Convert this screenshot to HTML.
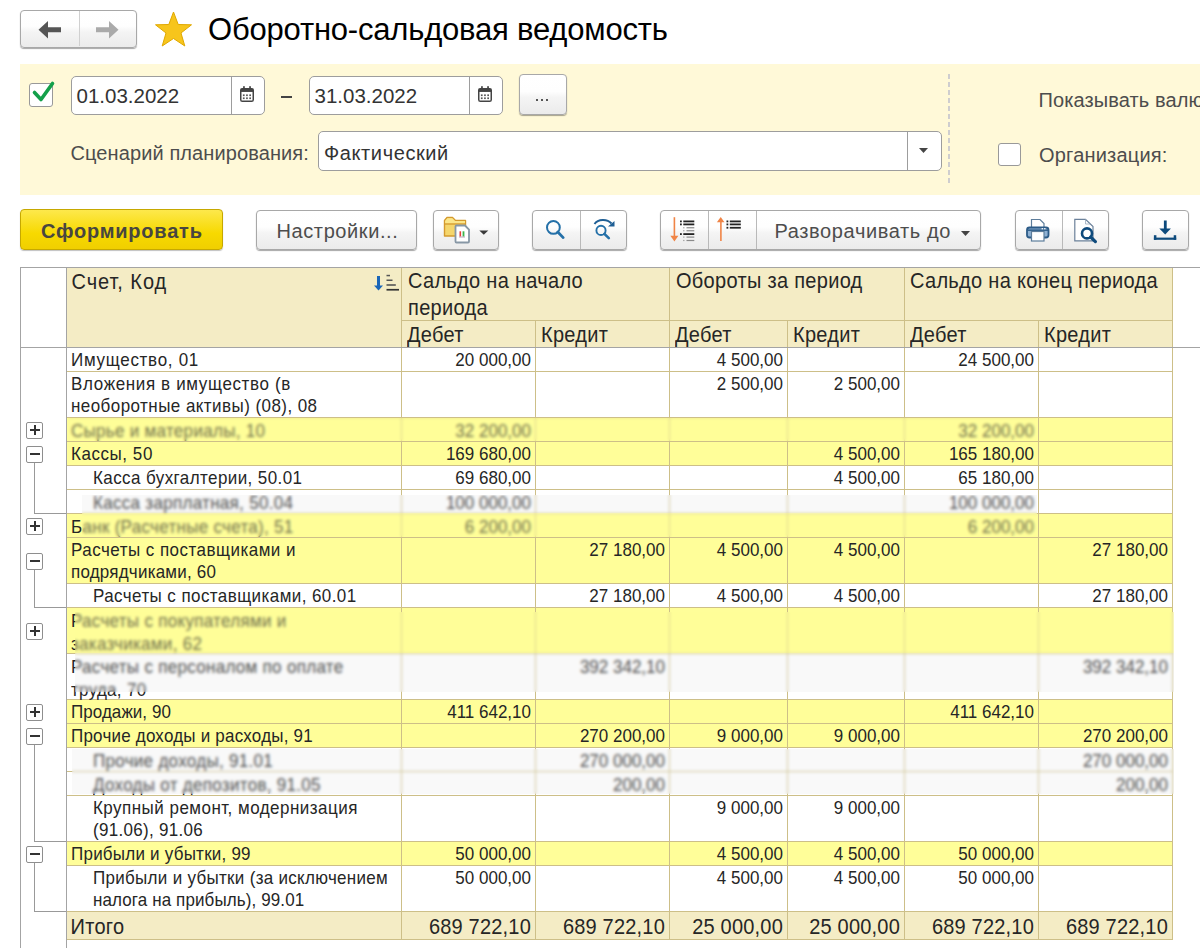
<!DOCTYPE html>
<html><head><meta charset="utf-8"><style>
html,body{margin:0;padding:0;background:#fff;width:1200px;height:948px;overflow:hidden;position:relative;}
.a{position:absolute;box-sizing:content-box;}
.t{position:absolute;white-space:nowrap;font-family:"Liberation Sans", sans-serif;}
.btn{background:linear-gradient(#ffffff,#fefefe 42%,#f4f4f4 58%,#ebebeb);border:1px solid #a8a8a8;box-shadow:0 1px 1px rgba(0,0,0,0.35);}
svg{position:absolute;overflow:visible;}
</style></head><body>
<div class="a btn" style="left:20px;top:10px;width:115px;height:36px;border-radius:4px;"></div><div class="a" style="left:79px;top:11px;width:1px;height:35px;background:#d0d0d0;"></div><svg class="a" style="left:38px;top:20px" width="24" height="20" viewBox="0 0 24 20"><path d="M0.5 9.75 L10 1 L10 7.2 L23 7.2 L23 12.2 L10 12.2 L10 18.5 Z" fill="#555"/></svg><svg class="a" style="left:95px;top:20px" width="24" height="20" viewBox="0 0 24 20"><path d="M23.5 9.75 L14 1 L14 7.2 L1 7.2 L1 12.2 L14 12.2 L14 18.5 Z" fill="#aaa"/></svg><svg class="a" style="left:154px;top:11px" width="39" height="37" viewBox="0 0 39 37"><path d="M19.5 1 L24.2 13.5 L37.5 13.8 L27 22 L30.8 35 L19.5 27.5 L8.2 35 L12 22 L1.5 13.8 L14.8 13.5 Z" fill="#f7c51c" stroke="#e0a800" stroke-width="1"/></svg><div class="t" style="left:208px;top:11.0px;font-size:31px;line-height:37px;color:#000;letter-spacing:-0.2px;">Оборотно-сальдовая ведомость</div><div class="a" style="left:20px;top:64px;width:1180px;height:131px;background:#fff9d8;"></div><div class="a" style="left:29px;top:83px;width:22px;height:22px;background:#fff;border:1px solid #999;border-radius:3px;"></div><svg class="a" style="left:32px;top:80px" width="24" height="22" viewBox="0 0 24 22"><path d="M2.5 12.5 L9 19.5 L20.5 3.5" fill="none" stroke="#13a04a" stroke-width="3.6" stroke-linecap="round" stroke-linejoin="round"/></svg><div class="a" style="left:71px;top:76px;width:192px;height:37px;background:#fff;border:1px solid #9d9d9d;border-radius:5px;"></div><div class="a" style="left:231px;top:77px;width:1px;height:37px;background:#9d9d9d;"></div><div class="t" style="left:76.5px;top:82.5px;font-size:20.5px;line-height:25px;color:#333;">01.03.2022</div><svg class="a" style="left:239.5px;top:86px" width="15" height="17" viewBox="0 0 15 17"><rect x="0.75" y="2.75" width="12.5" height="12.5" rx="1.6" fill="#fff" stroke="#444" stroke-width="1.5"/><rect x="0.75" y="2.75" width="12.5" height="3.2" fill="#444"/><rect x="3.1" y="0.2" width="1.7" height="3.6" fill="#444"/><rect x="9.2" y="0.2" width="1.7" height="3.6" fill="#444"/><g fill="#555"><rect x="2.9" y="8.4" width="1.7" height="1.7"/><rect x="6.1" y="8.4" width="1.7" height="1.7"/><rect x="9.3" y="8.4" width="1.7" height="1.7"/><rect x="2.9" y="11.4" width="1.7" height="1.7"/><rect x="6.1" y="11.4" width="1.7" height="1.7"/><rect x="9.3" y="11.4" width="1.7" height="1.7"/></g></svg><div class="a" style="left:281px;top:96px;width:11px;height:2px;background:#444;"></div><div class="a" style="left:309px;top:76px;width:192px;height:37px;background:#fff;border:1px solid #9d9d9d;border-radius:5px;"></div><div class="a" style="left:469px;top:77px;width:1px;height:37px;background:#9d9d9d;"></div><div class="t" style="left:314.5px;top:82.5px;font-size:20.5px;line-height:25px;color:#333;">31.03.2022</div><svg class="a" style="left:477.5px;top:86px" width="15" height="17" viewBox="0 0 15 17"><rect x="0.75" y="2.75" width="12.5" height="12.5" rx="1.6" fill="#fff" stroke="#444" stroke-width="1.5"/><rect x="0.75" y="2.75" width="12.5" height="3.2" fill="#444"/><rect x="3.1" y="0.2" width="1.7" height="3.6" fill="#444"/><rect x="9.2" y="0.2" width="1.7" height="3.6" fill="#444"/><g fill="#555"><rect x="2.9" y="8.4" width="1.7" height="1.7"/><rect x="6.1" y="8.4" width="1.7" height="1.7"/><rect x="9.3" y="8.4" width="1.7" height="1.7"/><rect x="2.9" y="11.4" width="1.7" height="1.7"/><rect x="6.1" y="11.4" width="1.7" height="1.7"/><rect x="9.3" y="11.4" width="1.7" height="1.7"/></g></svg><div class="a btn" style="left:519px;top:74px;width:46px;height:39px;border-radius:4px;"></div><div class="a" style="left:536px;top:99px;width:2px;height:2px;background:#555;"></div><div class="a" style="left:541px;top:99px;width:2px;height:2px;background:#555;"></div><div class="a" style="left:546px;top:99px;width:2px;height:2px;background:#555;"></div><div class="t" style="left:70.5px;top:141.0px;font-size:20px;line-height:24px;color:#4d4d4d;letter-spacing:0.1px;">Сценарий планирования:</div><div class="a" style="left:318px;top:131px;width:622px;height:38px;background:#fff;border:1px solid #9d9d9d;border-radius:5px;"></div><div class="a" style="left:907px;top:132px;width:1px;height:38px;background:#9d9d9d;"></div><svg class="a" style="left:919px;top:148px" width="10" height="6" viewBox="0 0 10 6"><path d="M0 0 L9 0 L4.5 5 Z" fill="#444"/></svg><div class="t" style="left:324px;top:141.0px;font-size:20px;line-height:24px;color:#333;letter-spacing:0.6px;">Фактический</div><svg class="a" style="left:947px;top:74px" width="4" height="112" viewBox="0 0 4 112"><path d="M2 0 L2 112" stroke="#c3c3cd" stroke-width="1.6" stroke-dasharray="5 3"/></svg><div class="t" style="left:1038.5px;top:88.0px;font-size:20px;line-height:24px;color:#4d4d4d;letter-spacing:0.1px;">Показывать валюту</div><div class="a" style="left:998px;top:143px;width:21px;height:21px;background:#fff;border:1px solid #999;border-radius:3px;"></div><div class="t" style="left:1039px;top:143.0px;font-size:20px;line-height:24px;color:#4d4d4d;letter-spacing:0.2px;">Организация:</div><div class="a" style="left:20px;top:209px;width:201px;height:39px;border-radius:4px;border:1px solid #c6a800;background:linear-gradient(#fde84c,#f7d900 60%,#f0cf00);box-shadow:0 1px 1px rgba(0,0,0,0.25);"></div><div class="t" style="left:41px;top:219.0px;font-size:20px;line-height:24px;color:#484640;letter-spacing:0.78px;font-weight:bold;">Сформировать</div><div class="a btn" style="left:256px;top:210px;width:159px;height:38px;border-radius:4px;"></div><div class="t" style="left:276.5px;top:219.0px;font-size:20px;line-height:24px;color:#4d4d4d;letter-spacing:0.6px;">Настройки...</div><div class="a btn" style="left:433px;top:210px;width:64px;height:38px;border-radius:4px;"></div><svg class="a" style="left:443px;top:216px" width="28" height="28" viewBox="0 0 28 28">
<path d="M1.5 20 L1.5 4.5 L4 1.5 L9.5 1.5 L12.5 4.5 L22.5 4.5 L22.5 20 Z" fill="#f5d66c" stroke="#d49a2e" stroke-width="1.4" stroke-linejoin="round"/>
<path d="M2.2 5 L4.3 2.2 L9.2 2.2 L12 5 L22 5 L22 7.6 L2.2 7.6 Z" fill="#fbe68a"/>
<path d="M1.5 8 L22.5 8" stroke="#d49a2e" stroke-width="1.3"/>
<path d="M13.5 9.5 L22 9.5 L26 13.5 L26 25.5 Q26 26.5 25 26.5 L13.5 26.5 Q12.5 26.5 12.5 25.5 L12.5 10.5 Q12.5 9.5 13.5 9.5 Z" fill="#fff" stroke="#8797a5" stroke-width="1.8"/>
<rect x="16.5" y="15.3" width="1.6" height="5.2" fill="#e83a3a"/><rect x="19.6" y="15.3" width="1.8" height="5.2" fill="#3cb44a"/><rect x="16" y="20.6" width="6" height="0.8" fill="#a98aa0"/>
</svg><svg class="a" style="left:479px;top:230px" width="10" height="6" viewBox="0 0 10 6"><path d="M0.3 0.5 L9.3 0.5 L4.8 4.8 Z" fill="#3a3a3a"/></svg><div class="a btn" style="left:532px;top:210px;width:93px;height:38px;border-radius:4px;"></div><div class="a" style="left:580px;top:211px;width:1px;height:38px;background:#b9b9b9;"></div><svg class="a" style="left:544px;top:220px" width="24" height="22" viewBox="0 0 24 22"><circle cx="9.4" cy="7.4" r="6.4" fill="none" stroke="#2470a8" stroke-width="2"/><path d="M13.8 12 L19.2 17.6" stroke="#2470a8" stroke-width="2.8" stroke-linecap="round"/></svg><svg class="a" style="left:592px;top:218px" width="26" height="24" viewBox="0 0 26 24"><circle cx="9" cy="12.4" r="4.6" fill="none" stroke="#2470a8" stroke-width="1.9"/><path d="M12.4 15.8 L16.8 20.2" stroke="#2470a8" stroke-width="2.6" stroke-linecap="round"/><path d="M2.5 6 C6 1 15 0.5 19.5 5.5" fill="none" stroke="#1f5f95" stroke-width="2"/><path d="M22.5 3 L22.5 8.5 L16 8.5 Z" fill="#1f5f95"/></svg><div class="a btn" style="left:660px;top:210px;width:319px;height:38px;border-radius:4px;"></div><div class="a" style="left:708px;top:211px;width:1px;height:38px;background:#b9b9b9;"></div><div class="a" style="left:756px;top:211px;width:1px;height:38px;background:#b9b9b9;"></div><svg class="a" style="left:662px;top:212px" width="90" height="36" viewBox="0 0 90 36"><path d="M12.4 5.2 L12.4 25" stroke="#f08446" stroke-width="1.6"/><path d="M8.4 23.8 L16.4 23.8 L12.4 29.6 Z" fill="#f08446"/><rect x="18" y="8.5" width="1.8" height="1.8" fill="#222"/><rect x="21.3" y="8.5" width="11" height="1.8" fill="#222"/><rect x="18" y="11.5" width="1.8" height="1.8" fill="#222"/><rect x="21.3" y="11.5" width="11" height="1.8" fill="#222"/><rect x="21.2" y="15.15" width="1.2" height="1.2" fill="#999"/><rect x="24.5" y="15.15" width="7.8" height="1.2" fill="#8a8a8a"/><rect x="21.2" y="18.15" width="1.2" height="1.2" fill="#999"/><rect x="24.5" y="18.15" width="7.8" height="1.2" fill="#8a8a8a"/><rect x="18" y="21.200000000000003" width="1.8" height="1.8" fill="#222"/><rect x="21.3" y="21.200000000000003" width="11" height="1.8" fill="#222"/><rect x="21.2" y="24.5" width="1.2" height="1.2" fill="#999"/><rect x="24.5" y="24.5" width="7.8" height="1.2" fill="#8a8a8a"/><rect x="21.2" y="27.9" width="1.2" height="1.2" fill="#999"/><rect x="24.5" y="27.9" width="7.8" height="1.2" fill="#8a8a8a"/><path d="M58.9 9 L58.9 29" stroke="#f08446" stroke-width="1.6"/><path d="M54.9 10.2 L62.5 10.2 L58.7 5 Z" fill="#f08446"/><rect x="64.5" y="8.5" width="1.8" height="1.8" fill="#222"/><rect x="67.8" y="8.5" width="11" height="1.8" fill="#222"/><rect x="64.5" y="11.5" width="1.8" height="1.8" fill="#222"/><rect x="67.8" y="11.5" width="11" height="1.8" fill="#222"/><rect x="64.5" y="14.85" width="1.8" height="1.8" fill="#222"/><rect x="67.8" y="14.85" width="11" height="1.8" fill="#222"/></svg><div class="t" style="left:774.5px;top:219.0px;font-size:20px;line-height:24px;color:#4d4d4d;letter-spacing:0.62px;">Разворачивать до</div><svg class="a" style="left:961px;top:231px" width="10" height="6" viewBox="0 0 10 6"><path d="M0 0 L9 0 L4.5 5 Z" fill="#444"/></svg><div class="a btn" style="left:1015px;top:210px;width:92px;height:38px;border-radius:4px;"></div><div class="a" style="left:1062px;top:211px;width:1px;height:38px;background:#b9b9b9;"></div><svg class="a" style="left:1018px;top:212px" width="90" height="36" viewBox="0 0 90 36"><path d="M13.5 7.5 L22 7.5 L26 11.5 L26 15.5 L13.5 15.5 Z" fill="#fff" stroke="#5d7d9b" stroke-width="1.2"/><rect x="9" y="15.5" width="21.5" height="10" rx="2.5" fill="#8fb1d3" stroke="#2c5b87" stroke-width="1.8"/><rect x="9.5" y="17.4" width="20.5" height="1.5" fill="#2c5b87"/><rect x="23.6" y="16.1" width="1.4" height="1.2" fill="#fff"/><rect x="26.1" y="16.1" width="1.4" height="1.2" fill="#fff"/><rect x="13.5" y="19.5" width="12.5" height="9.5" fill="#fff" stroke="#5d7d9b" stroke-width="1.2"/></svg><svg class="a" style="left:1018px;top:212px" width="90" height="36" viewBox="0 0 90 36"><path d="M56.8 7.3 L67.5 7.3 L75 14.5 L75 28.8 L56.8 28.8 Z" fill="#fff" stroke="#6b819a" stroke-width="1.2"/><path d="M67.5 7.3 L67.5 12 L72 12" fill="none" stroke="#9aaabb" stroke-width="0.8"/><circle cx="69" cy="21.4" r="5" fill="#fff" stroke="#0e4a7c" stroke-width="2.6"/><path d="M72.6 25 L77.4 29.6" stroke="#0e4a7c" stroke-width="3.2" stroke-linecap="round"/></svg><div class="a btn" style="left:1142px;top:210px;width:45px;height:38px;border-radius:4px;"></div><svg class="a" style="left:1153px;top:219px" width="24" height="22" viewBox="0 0 24 22"><rect x="10.9" y="1.5" width="2.8" height="9" fill="#0d4a7c"/><path d="M6.3 9.4 L17.9 9.4 L12.2 15.6 Z" fill="#0d4a7c"/><rect x="0.9" y="16.2" width="2.5" height="4.6" fill="#0d4a7c"/><rect x="20.7" y="16.2" width="2.5" height="4.6" fill="#0d4a7c"/><rect x="0.9" y="18.6" width="22.3" height="2.2" fill="#0d4a7c"/></svg><div class="a" style="left:67px;top:268px;width:1105px;height:79px;background:#f4ecc5;"></div><div class="a" style="left:20px;top:267px;width:1180px;height:1px;background:#a4a4a4;"></div><div class="a" style="left:20px;top:347px;width:1180px;height:1px;background:#a4a4a4;"></div><div class="a" style="left:401px;top:268px;width:1px;height:79px;background:#cdbf88;"></div><div class="a" style="left:669px;top:268px;width:1px;height:79px;background:#cdbf88;"></div><div class="a" style="left:904px;top:268px;width:1px;height:79px;background:#cdbf88;"></div><div class="a" style="left:1172px;top:268px;width:1px;height:79px;background:#cdbf88;"></div><div class="a" style="left:535px;top:320px;width:1px;height:27px;background:#cdbf88;"></div><div class="a" style="left:787px;top:320px;width:1px;height:27px;background:#cdbf88;"></div><div class="a" style="left:1038px;top:320px;width:1px;height:27px;background:#cdbf88;"></div><div class="a" style="left:401px;top:320px;width:771px;height:1px;background:#cdbf88;"></div><div class="t" style="left:71.5px;top:269.5px;font-size:20px;line-height:24px;color:#262626;letter-spacing:0.95px;transform:scaleY(1.08);transform-origin:0 19.0px;">Счет, Код</div><div class="t" style="left:408px;top:269.0px;font-size:20px;line-height:24px;color:#262626;letter-spacing:0.3px;transform:scaleY(1.08);transform-origin:0 19.0px;">Сальдо на начало</div><div class="t" style="left:408px;top:296.0px;font-size:20px;line-height:24px;color:#262626;letter-spacing:0.3px;transform:scaleY(1.08);transform-origin:0 19.0px;">периода</div><div class="t" style="left:676px;top:269.0px;font-size:20px;line-height:24px;color:#262626;letter-spacing:0.3px;transform:scaleY(1.08);transform-origin:0 19.0px;">Обороты за период</div><div class="t" style="left:910px;top:269.0px;font-size:20px;line-height:24px;color:#262626;letter-spacing:0.3px;transform:scaleY(1.08);transform-origin:0 19.0px;">Сальдо на конец периода</div><div class="t" style="left:407px;top:323.0px;font-size:20px;line-height:24px;color:#262626;letter-spacing:0.3px;transform:scaleY(1.08);transform-origin:0 19.0px;">Дебет</div><div class="t" style="left:541px;top:323.0px;font-size:20px;line-height:24px;color:#262626;letter-spacing:0.3px;transform:scaleY(1.08);transform-origin:0 19.0px;">Кредит</div><div class="t" style="left:675px;top:323.0px;font-size:20px;line-height:24px;color:#262626;letter-spacing:0.3px;transform:scaleY(1.08);transform-origin:0 19.0px;">Дебет</div><div class="t" style="left:793px;top:323.0px;font-size:20px;line-height:24px;color:#262626;letter-spacing:0.3px;transform:scaleY(1.08);transform-origin:0 19.0px;">Кредит</div><div class="t" style="left:910px;top:323.0px;font-size:20px;line-height:24px;color:#262626;letter-spacing:0.3px;transform:scaleY(1.08);transform-origin:0 19.0px;">Дебет</div><div class="t" style="left:1044px;top:323.0px;font-size:20px;line-height:24px;color:#262626;letter-spacing:0.3px;transform:scaleY(1.08);transform-origin:0 19.0px;">Кредит</div><svg class="a" style="left:373px;top:274px" width="28" height="18" viewBox="0 0 28 18"><rect x="4" y="2" width="3" height="10" fill="#1a66b8"/><path d="M1 11.5 L10 11.5 L5.5 16.5 Z" fill="#1a66b8"/><g fill="#555"><rect x="13.5" y="0.8" width="3.5" height="1.5"/><rect x="13.5" y="5.5" width="6" height="1.5"/><rect x="13.5" y="10.2" width="9.3" height="1.6"/><rect x="13.5" y="14.9" width="12.5" height="1.7" fill="#333"/></g></svg><div class="a" style="left:67px;top:348px;width:1105px;height:23px;background:#fff;"></div><div class="a" style="left:67px;top:371px;width:1105px;height:1px;background:#cdbf88;"></div><div class="a" style="left:401px;top:348px;width:1px;height:24px;background:#cdbf88;"></div><div class="a" style="left:535px;top:348px;width:1px;height:24px;background:#cdbf88;"></div><div class="a" style="left:669px;top:348px;width:1px;height:24px;background:#cdbf88;"></div><div class="a" style="left:787px;top:348px;width:1px;height:24px;background:#cdbf88;"></div><div class="a" style="left:904px;top:348px;width:1px;height:24px;background:#cdbf88;"></div><div class="a" style="left:1038px;top:348px;width:1px;height:24px;background:#cdbf88;"></div><div class="a" style="left:1172px;top:348px;width:1px;height:24px;background:#cdbf88;"></div><div class="a" style="left:0;top:0;width:1200px;height:948px;"><div class="t" style="left:71px;top:350.5px;font-size:17px;line-height:20px;color:#262626;letter-spacing:0.71px;transform:scaleY(1.07);transform-origin:0 15.5px;">Имущество, 01</div><div class="t" style="right:669px;top:350.5px;font-size:17px;line-height:20px;color:#262626;transform:scaleY(1.07);transform-origin:0 15.5px;">20 000,00</div><div class="t" style="right:417px;top:350.5px;font-size:17px;line-height:20px;color:#262626;transform:scaleY(1.07);transform-origin:0 15.5px;">4 500,00</div><div class="t" style="right:166px;top:350.5px;font-size:17px;line-height:20px;color:#262626;transform:scaleY(1.07);transform-origin:0 15.5px;">24 500,00</div></div><div class="a" style="left:67px;top:372px;width:1105px;height:45px;background:#fff;"></div><div class="a" style="left:67px;top:417px;width:1105px;height:1px;background:#cdbf88;"></div><div class="a" style="left:401px;top:372px;width:1px;height:46px;background:#cdbf88;"></div><div class="a" style="left:535px;top:372px;width:1px;height:46px;background:#cdbf88;"></div><div class="a" style="left:669px;top:372px;width:1px;height:46px;background:#cdbf88;"></div><div class="a" style="left:787px;top:372px;width:1px;height:46px;background:#cdbf88;"></div><div class="a" style="left:904px;top:372px;width:1px;height:46px;background:#cdbf88;"></div><div class="a" style="left:1038px;top:372px;width:1px;height:46px;background:#cdbf88;"></div><div class="a" style="left:1172px;top:372px;width:1px;height:46px;background:#cdbf88;"></div><div class="a" style="left:0;top:0;width:1200px;height:948px;"><div class="t" style="left:71px;top:374.5px;font-size:17px;line-height:20px;color:#262626;letter-spacing:0.64px;transform:scaleY(1.07);transform-origin:0 15.5px;">Вложения в имущество (в</div><div class="t" style="left:71px;top:397.0px;font-size:17px;line-height:20px;color:#262626;letter-spacing:0.44px;transform:scaleY(1.07);transform-origin:0 15.5px;">необоротные активы) (08), 08</div><div class="t" style="right:417px;top:374.5px;font-size:17px;line-height:20px;color:#262626;transform:scaleY(1.07);transform-origin:0 15.5px;">2 500,00</div><div class="t" style="right:300px;top:374.5px;font-size:17px;line-height:20px;color:#262626;transform:scaleY(1.07);transform-origin:0 15.5px;">2 500,00</div></div><div class="a" style="left:67px;top:418px;width:1105px;height:23px;background:#fffe99;"></div><div class="a" style="left:67px;top:441px;width:1105px;height:1px;background:#cdbf88;"></div><div class="a" style="left:401px;top:418px;width:1px;height:24px;background:#cdbf88;"></div><div class="a" style="left:535px;top:418px;width:1px;height:24px;background:#cdbf88;"></div><div class="a" style="left:669px;top:418px;width:1px;height:24px;background:#cdbf88;"></div><div class="a" style="left:787px;top:418px;width:1px;height:24px;background:#cdbf88;"></div><div class="a" style="left:904px;top:418px;width:1px;height:24px;background:#cdbf88;"></div><div class="a" style="left:1038px;top:418px;width:1px;height:24px;background:#cdbf88;"></div><div class="a" style="left:1172px;top:418px;width:1px;height:24px;background:#cdbf88;"></div><div class="a" style="left:0;top:0;width:1200px;height:948px;"><div class="t" style="left:71px;top:422.0px;font-size:17px;line-height:20px;color:#262626;letter-spacing:0.3px;transform:scaleY(1.07);transform-origin:0 15.5px;">Сырье и материалы, 10</div><div class="t" style="right:669px;top:422.0px;font-size:17px;line-height:20px;color:#262626;transform:scaleY(1.07);transform-origin:0 15.5px;">32 200,00</div><div class="t" style="right:166px;top:422.0px;font-size:17px;line-height:20px;color:#262626;transform:scaleY(1.07);transform-origin:0 15.5px;">32 200,00</div></div><div class="a" style="left:67px;top:442px;width:1105px;height:23px;background:#fffe99;"></div><div class="a" style="left:67px;top:465px;width:1105px;height:1px;background:#cdbf88;"></div><div class="a" style="left:401px;top:442px;width:1px;height:24px;background:#cdbf88;"></div><div class="a" style="left:535px;top:442px;width:1px;height:24px;background:#cdbf88;"></div><div class="a" style="left:669px;top:442px;width:1px;height:24px;background:#cdbf88;"></div><div class="a" style="left:787px;top:442px;width:1px;height:24px;background:#cdbf88;"></div><div class="a" style="left:904px;top:442px;width:1px;height:24px;background:#cdbf88;"></div><div class="a" style="left:1038px;top:442px;width:1px;height:24px;background:#cdbf88;"></div><div class="a" style="left:1172px;top:442px;width:1px;height:24px;background:#cdbf88;"></div><div class="a" style="left:0;top:0;width:1200px;height:948px;"><div class="t" style="left:71px;top:444.5px;font-size:17px;line-height:20px;color:#262626;letter-spacing:0.55px;transform:scaleY(1.07);transform-origin:0 15.5px;">Кассы, 50</div><div class="t" style="right:669px;top:444.5px;font-size:17px;line-height:20px;color:#262626;transform:scaleY(1.07);transform-origin:0 15.5px;">169 680,00</div><div class="t" style="right:300px;top:444.5px;font-size:17px;line-height:20px;color:#262626;transform:scaleY(1.07);transform-origin:0 15.5px;">4 500,00</div><div class="t" style="right:166px;top:444.5px;font-size:17px;line-height:20px;color:#262626;transform:scaleY(1.07);transform-origin:0 15.5px;">165 180,00</div></div><div class="a" style="left:67px;top:466px;width:1105px;height:23px;background:#fff;"></div><div class="a" style="left:67px;top:489px;width:1105px;height:1px;background:#cdbf88;"></div><div class="a" style="left:401px;top:466px;width:1px;height:24px;background:#cdbf88;"></div><div class="a" style="left:535px;top:466px;width:1px;height:24px;background:#cdbf88;"></div><div class="a" style="left:669px;top:466px;width:1px;height:24px;background:#cdbf88;"></div><div class="a" style="left:787px;top:466px;width:1px;height:24px;background:#cdbf88;"></div><div class="a" style="left:904px;top:466px;width:1px;height:24px;background:#cdbf88;"></div><div class="a" style="left:1038px;top:466px;width:1px;height:24px;background:#cdbf88;"></div><div class="a" style="left:1172px;top:466px;width:1px;height:24px;background:#cdbf88;"></div><div class="a" style="left:0;top:0;width:1200px;height:948px;"><div class="t" style="left:93px;top:468.5px;font-size:17px;line-height:20px;color:#262626;letter-spacing:0.41px;transform:scaleY(1.07);transform-origin:0 15.5px;">Касса бухгалтерии, 50.01</div><div class="t" style="right:669px;top:468.5px;font-size:17px;line-height:20px;color:#262626;transform:scaleY(1.07);transform-origin:0 15.5px;">69 680,00</div><div class="t" style="right:300px;top:468.5px;font-size:17px;line-height:20px;color:#262626;transform:scaleY(1.07);transform-origin:0 15.5px;">4 500,00</div><div class="t" style="right:166px;top:468.5px;font-size:17px;line-height:20px;color:#262626;transform:scaleY(1.07);transform-origin:0 15.5px;">65 180,00</div></div><div class="a" style="left:67px;top:490px;width:1105px;height:23px;background:#fff;"></div><div class="a" style="left:67px;top:513px;width:1105px;height:1px;background:#cdbf88;"></div><div class="a" style="left:401px;top:490px;width:1px;height:24px;background:#cdbf88;"></div><div class="a" style="left:535px;top:490px;width:1px;height:24px;background:#cdbf88;"></div><div class="a" style="left:669px;top:490px;width:1px;height:24px;background:#cdbf88;"></div><div class="a" style="left:787px;top:490px;width:1px;height:24px;background:#cdbf88;"></div><div class="a" style="left:904px;top:490px;width:1px;height:24px;background:#cdbf88;"></div><div class="a" style="left:1038px;top:490px;width:1px;height:24px;background:#cdbf88;"></div><div class="a" style="left:1172px;top:490px;width:1px;height:24px;background:#cdbf88;"></div><div class="a" style="left:0;top:0;width:1200px;height:948px;"><div class="t" style="left:93px;top:494.0px;font-size:17px;line-height:20px;color:#262626;letter-spacing:0.3px;transform:scaleY(1.07);transform-origin:0 15.5px;">Касса зарплатная, 50.04</div><div class="t" style="right:669px;top:494.0px;font-size:17px;line-height:20px;color:#262626;transform:scaleY(1.07);transform-origin:0 15.5px;">100 000,00</div><div class="t" style="right:166px;top:494.0px;font-size:17px;line-height:20px;color:#262626;transform:scaleY(1.07);transform-origin:0 15.5px;">100 000,00</div></div><div class="a" style="left:67px;top:514px;width:1105px;height:23px;background:#fffe99;"></div><div class="a" style="left:67px;top:537px;width:1105px;height:1px;background:#cdbf88;"></div><div class="a" style="left:401px;top:514px;width:1px;height:24px;background:#cdbf88;"></div><div class="a" style="left:535px;top:514px;width:1px;height:24px;background:#cdbf88;"></div><div class="a" style="left:669px;top:514px;width:1px;height:24px;background:#cdbf88;"></div><div class="a" style="left:787px;top:514px;width:1px;height:24px;background:#cdbf88;"></div><div class="a" style="left:904px;top:514px;width:1px;height:24px;background:#cdbf88;"></div><div class="a" style="left:1038px;top:514px;width:1px;height:24px;background:#cdbf88;"></div><div class="a" style="left:1172px;top:514px;width:1px;height:24px;background:#cdbf88;"></div><div class="a" style="left:0;top:0;width:1200px;height:948px;"><div class="t" style="left:71px;top:518.0px;font-size:17px;line-height:20px;color:#262626;letter-spacing:0.3px;transform:scaleY(1.07);transform-origin:0 15.5px;">Банк (Расчетные счета), 51</div><div class="t" style="right:669px;top:518.0px;font-size:17px;line-height:20px;color:#262626;transform:scaleY(1.07);transform-origin:0 15.5px;">6 200,00</div><div class="t" style="right:166px;top:518.0px;font-size:17px;line-height:20px;color:#262626;transform:scaleY(1.07);transform-origin:0 15.5px;">6 200,00</div></div><div class="a" style="left:67px;top:538px;width:1105px;height:45px;background:#fffe99;"></div><div class="a" style="left:67px;top:583px;width:1105px;height:1px;background:#cdbf88;"></div><div class="a" style="left:401px;top:538px;width:1px;height:46px;background:#cdbf88;"></div><div class="a" style="left:535px;top:538px;width:1px;height:46px;background:#cdbf88;"></div><div class="a" style="left:669px;top:538px;width:1px;height:46px;background:#cdbf88;"></div><div class="a" style="left:787px;top:538px;width:1px;height:46px;background:#cdbf88;"></div><div class="a" style="left:904px;top:538px;width:1px;height:46px;background:#cdbf88;"></div><div class="a" style="left:1038px;top:538px;width:1px;height:46px;background:#cdbf88;"></div><div class="a" style="left:1172px;top:538px;width:1px;height:46px;background:#cdbf88;"></div><div class="a" style="left:0;top:0;width:1200px;height:948px;"><div class="t" style="left:71px;top:540.5px;font-size:17px;line-height:20px;color:#262626;letter-spacing:0.47px;transform:scaleY(1.07);transform-origin:0 15.5px;">Расчеты с поставщиками и</div><div class="t" style="left:71px;top:563.0px;font-size:17px;line-height:20px;color:#262626;letter-spacing:0.21px;transform:scaleY(1.07);transform-origin:0 15.5px;">подрядчиками, 60</div><div class="t" style="right:535px;top:540.5px;font-size:17px;line-height:20px;color:#262626;transform:scaleY(1.07);transform-origin:0 15.5px;">27 180,00</div><div class="t" style="right:417px;top:540.5px;font-size:17px;line-height:20px;color:#262626;transform:scaleY(1.07);transform-origin:0 15.5px;">4 500,00</div><div class="t" style="right:300px;top:540.5px;font-size:17px;line-height:20px;color:#262626;transform:scaleY(1.07);transform-origin:0 15.5px;">4 500,00</div><div class="t" style="right:32px;top:540.5px;font-size:17px;line-height:20px;color:#262626;transform:scaleY(1.07);transform-origin:0 15.5px;">27 180,00</div></div><div class="a" style="left:67px;top:584px;width:1105px;height:23px;background:#fff;"></div><div class="a" style="left:67px;top:607px;width:1105px;height:1px;background:#cdbf88;"></div><div class="a" style="left:401px;top:584px;width:1px;height:24px;background:#cdbf88;"></div><div class="a" style="left:535px;top:584px;width:1px;height:24px;background:#cdbf88;"></div><div class="a" style="left:669px;top:584px;width:1px;height:24px;background:#cdbf88;"></div><div class="a" style="left:787px;top:584px;width:1px;height:24px;background:#cdbf88;"></div><div class="a" style="left:904px;top:584px;width:1px;height:24px;background:#cdbf88;"></div><div class="a" style="left:1038px;top:584px;width:1px;height:24px;background:#cdbf88;"></div><div class="a" style="left:1172px;top:584px;width:1px;height:24px;background:#cdbf88;"></div><div class="a" style="left:0;top:0;width:1200px;height:948px;"><div class="t" style="left:93px;top:586.5px;font-size:17px;line-height:20px;color:#262626;letter-spacing:0.42px;transform:scaleY(1.07);transform-origin:0 15.5px;">Расчеты с поставщиками, 60.01</div><div class="t" style="right:535px;top:586.5px;font-size:17px;line-height:20px;color:#262626;transform:scaleY(1.07);transform-origin:0 15.5px;">27 180,00</div><div class="t" style="right:417px;top:586.5px;font-size:17px;line-height:20px;color:#262626;transform:scaleY(1.07);transform-origin:0 15.5px;">4 500,00</div><div class="t" style="right:300px;top:586.5px;font-size:17px;line-height:20px;color:#262626;transform:scaleY(1.07);transform-origin:0 15.5px;">4 500,00</div><div class="t" style="right:32px;top:586.5px;font-size:17px;line-height:20px;color:#262626;transform:scaleY(1.07);transform-origin:0 15.5px;">27 180,00</div></div><div class="a" style="left:67px;top:608px;width:1105px;height:45px;background:#fffe99;"></div><div class="a" style="left:67px;top:653px;width:1105px;height:1px;background:#cdbf88;"></div><div class="a" style="left:401px;top:608px;width:1px;height:46px;background:#cdbf88;"></div><div class="a" style="left:535px;top:608px;width:1px;height:46px;background:#cdbf88;"></div><div class="a" style="left:669px;top:608px;width:1px;height:46px;background:#cdbf88;"></div><div class="a" style="left:787px;top:608px;width:1px;height:46px;background:#cdbf88;"></div><div class="a" style="left:904px;top:608px;width:1px;height:46px;background:#cdbf88;"></div><div class="a" style="left:1038px;top:608px;width:1px;height:46px;background:#cdbf88;"></div><div class="a" style="left:1172px;top:608px;width:1px;height:46px;background:#cdbf88;"></div><div class="a" style="left:0;top:0;width:1200px;height:948px;"><div class="t" style="left:71px;top:612.0px;font-size:17px;line-height:20px;color:#262626;letter-spacing:0.3px;transform:scaleY(1.07);transform-origin:0 15.5px;">Расчеты с покупателями и</div><div class="t" style="left:71px;top:634.5px;font-size:17px;line-height:20px;color:#262626;letter-spacing:0.3px;transform:scaleY(1.07);transform-origin:0 15.5px;">заказчиками, 62</div></div><div class="a" style="left:67px;top:654px;width:1105px;height:45px;background:#fff;"></div><div class="a" style="left:67px;top:699px;width:1105px;height:1px;background:#cdbf88;"></div><div class="a" style="left:401px;top:654px;width:1px;height:46px;background:#cdbf88;"></div><div class="a" style="left:535px;top:654px;width:1px;height:46px;background:#cdbf88;"></div><div class="a" style="left:669px;top:654px;width:1px;height:46px;background:#cdbf88;"></div><div class="a" style="left:787px;top:654px;width:1px;height:46px;background:#cdbf88;"></div><div class="a" style="left:904px;top:654px;width:1px;height:46px;background:#cdbf88;"></div><div class="a" style="left:1038px;top:654px;width:1px;height:46px;background:#cdbf88;"></div><div class="a" style="left:1172px;top:654px;width:1px;height:46px;background:#cdbf88;"></div><div class="a" style="left:0;top:0;width:1200px;height:948px;"><div class="t" style="left:71px;top:658.0px;font-size:17px;line-height:20px;color:#262626;letter-spacing:0.3px;transform:scaleY(1.07);transform-origin:0 15.5px;">Расчеты с персоналом по оплате</div><div class="t" style="left:71px;top:680.5px;font-size:17px;line-height:20px;color:#262626;letter-spacing:0.3px;transform:scaleY(1.07);transform-origin:0 15.5px;">труда, 70</div><div class="t" style="right:535px;top:658.0px;font-size:17px;line-height:20px;color:#262626;transform:scaleY(1.07);transform-origin:0 15.5px;">392 342,10</div><div class="t" style="right:32px;top:658.0px;font-size:17px;line-height:20px;color:#262626;transform:scaleY(1.07);transform-origin:0 15.5px;">392 342,10</div></div><div class="a" style="left:67px;top:700px;width:1105px;height:23px;background:#fffe99;"></div><div class="a" style="left:67px;top:723px;width:1105px;height:1px;background:#cdbf88;"></div><div class="a" style="left:401px;top:700px;width:1px;height:24px;background:#cdbf88;"></div><div class="a" style="left:535px;top:700px;width:1px;height:24px;background:#cdbf88;"></div><div class="a" style="left:669px;top:700px;width:1px;height:24px;background:#cdbf88;"></div><div class="a" style="left:787px;top:700px;width:1px;height:24px;background:#cdbf88;"></div><div class="a" style="left:904px;top:700px;width:1px;height:24px;background:#cdbf88;"></div><div class="a" style="left:1038px;top:700px;width:1px;height:24px;background:#cdbf88;"></div><div class="a" style="left:1172px;top:700px;width:1px;height:24px;background:#cdbf88;"></div><div class="a" style="left:0;top:0;width:1200px;height:948px;"><div class="t" style="left:71px;top:702.5px;font-size:17px;line-height:20px;color:#262626;letter-spacing:0.05px;transform:scaleY(1.07);transform-origin:0 15.5px;">Продажи, 90</div><div class="t" style="right:669px;top:702.5px;font-size:17px;line-height:20px;color:#262626;transform:scaleY(1.07);transform-origin:0 15.5px;">411 642,10</div><div class="t" style="right:166px;top:702.5px;font-size:17px;line-height:20px;color:#262626;transform:scaleY(1.07);transform-origin:0 15.5px;">411 642,10</div></div><div class="a" style="left:67px;top:724px;width:1105px;height:23px;background:#fffe99;"></div><div class="a" style="left:67px;top:747px;width:1105px;height:1px;background:#cdbf88;"></div><div class="a" style="left:401px;top:724px;width:1px;height:24px;background:#cdbf88;"></div><div class="a" style="left:535px;top:724px;width:1px;height:24px;background:#cdbf88;"></div><div class="a" style="left:669px;top:724px;width:1px;height:24px;background:#cdbf88;"></div><div class="a" style="left:787px;top:724px;width:1px;height:24px;background:#cdbf88;"></div><div class="a" style="left:904px;top:724px;width:1px;height:24px;background:#cdbf88;"></div><div class="a" style="left:1038px;top:724px;width:1px;height:24px;background:#cdbf88;"></div><div class="a" style="left:1172px;top:724px;width:1px;height:24px;background:#cdbf88;"></div><div class="a" style="left:0;top:0;width:1200px;height:948px;"><div class="t" style="left:71px;top:726.5px;font-size:17px;line-height:20px;color:#262626;letter-spacing:0.21px;transform:scaleY(1.07);transform-origin:0 15.5px;">Прочие доходы и расходы, 91</div><div class="t" style="right:535px;top:726.5px;font-size:17px;line-height:20px;color:#262626;transform:scaleY(1.07);transform-origin:0 15.5px;">270 200,00</div><div class="t" style="right:417px;top:726.5px;font-size:17px;line-height:20px;color:#262626;transform:scaleY(1.07);transform-origin:0 15.5px;">9 000,00</div><div class="t" style="right:300px;top:726.5px;font-size:17px;line-height:20px;color:#262626;transform:scaleY(1.07);transform-origin:0 15.5px;">9 000,00</div><div class="t" style="right:32px;top:726.5px;font-size:17px;line-height:20px;color:#262626;transform:scaleY(1.07);transform-origin:0 15.5px;">270 200,00</div></div><div class="a" style="left:67px;top:748px;width:1105px;height:23px;background:#fff;"></div><div class="a" style="left:67px;top:771px;width:1105px;height:1px;background:#cdbf88;"></div><div class="a" style="left:401px;top:748px;width:1px;height:24px;background:#cdbf88;"></div><div class="a" style="left:535px;top:748px;width:1px;height:24px;background:#cdbf88;"></div><div class="a" style="left:669px;top:748px;width:1px;height:24px;background:#cdbf88;"></div><div class="a" style="left:787px;top:748px;width:1px;height:24px;background:#cdbf88;"></div><div class="a" style="left:904px;top:748px;width:1px;height:24px;background:#cdbf88;"></div><div class="a" style="left:1038px;top:748px;width:1px;height:24px;background:#cdbf88;"></div><div class="a" style="left:1172px;top:748px;width:1px;height:24px;background:#cdbf88;"></div><div class="a" style="left:0;top:0;width:1200px;height:948px;"><div class="t" style="left:93px;top:752.0px;font-size:17px;line-height:20px;color:#262626;letter-spacing:0.3px;transform:scaleY(1.07);transform-origin:0 15.5px;">Прочие доходы, 91.01</div><div class="t" style="right:535px;top:752.0px;font-size:17px;line-height:20px;color:#262626;transform:scaleY(1.07);transform-origin:0 15.5px;">270 000,00</div><div class="t" style="right:32px;top:752.0px;font-size:17px;line-height:20px;color:#262626;transform:scaleY(1.07);transform-origin:0 15.5px;">270 000,00</div></div><div class="a" style="left:67px;top:772px;width:1105px;height:23px;background:#fff;"></div><div class="a" style="left:67px;top:795px;width:1105px;height:1px;background:#cdbf88;"></div><div class="a" style="left:401px;top:772px;width:1px;height:24px;background:#cdbf88;"></div><div class="a" style="left:535px;top:772px;width:1px;height:24px;background:#cdbf88;"></div><div class="a" style="left:669px;top:772px;width:1px;height:24px;background:#cdbf88;"></div><div class="a" style="left:787px;top:772px;width:1px;height:24px;background:#cdbf88;"></div><div class="a" style="left:904px;top:772px;width:1px;height:24px;background:#cdbf88;"></div><div class="a" style="left:1038px;top:772px;width:1px;height:24px;background:#cdbf88;"></div><div class="a" style="left:1172px;top:772px;width:1px;height:24px;background:#cdbf88;"></div><div class="a" style="left:0;top:0;width:1200px;height:948px;"><div class="t" style="left:93px;top:776.0px;font-size:17px;line-height:20px;color:#262626;letter-spacing:0.3px;transform:scaleY(1.07);transform-origin:0 15.5px;">Доходы от депозитов, 91.05</div><div class="t" style="right:535px;top:776.0px;font-size:17px;line-height:20px;color:#262626;transform:scaleY(1.07);transform-origin:0 15.5px;">200,00</div><div class="t" style="right:32px;top:776.0px;font-size:17px;line-height:20px;color:#262626;transform:scaleY(1.07);transform-origin:0 15.5px;">200,00</div></div><div class="a" style="left:67px;top:796px;width:1105px;height:45px;background:#fff;"></div><div class="a" style="left:67px;top:841px;width:1105px;height:1px;background:#cdbf88;"></div><div class="a" style="left:401px;top:796px;width:1px;height:46px;background:#cdbf88;"></div><div class="a" style="left:535px;top:796px;width:1px;height:46px;background:#cdbf88;"></div><div class="a" style="left:669px;top:796px;width:1px;height:46px;background:#cdbf88;"></div><div class="a" style="left:787px;top:796px;width:1px;height:46px;background:#cdbf88;"></div><div class="a" style="left:904px;top:796px;width:1px;height:46px;background:#cdbf88;"></div><div class="a" style="left:1038px;top:796px;width:1px;height:46px;background:#cdbf88;"></div><div class="a" style="left:1172px;top:796px;width:1px;height:46px;background:#cdbf88;"></div><div class="a" style="left:0;top:0;width:1200px;height:948px;"><div class="t" style="left:93px;top:798.5px;font-size:17px;line-height:20px;color:#262626;letter-spacing:0.47px;transform:scaleY(1.07);transform-origin:0 15.5px;">Крупный ремонт, модернизация</div><div class="t" style="left:93px;top:821.0px;font-size:17px;line-height:20px;color:#262626;letter-spacing:0.3px;transform:scaleY(1.07);transform-origin:0 15.5px;">(91.06), 91.06</div><div class="t" style="right:417px;top:798.5px;font-size:17px;line-height:20px;color:#262626;transform:scaleY(1.07);transform-origin:0 15.5px;">9 000,00</div><div class="t" style="right:300px;top:798.5px;font-size:17px;line-height:20px;color:#262626;transform:scaleY(1.07);transform-origin:0 15.5px;">9 000,00</div></div><div class="a" style="left:67px;top:842px;width:1105px;height:23px;background:#fffe99;"></div><div class="a" style="left:67px;top:865px;width:1105px;height:1px;background:#cdbf88;"></div><div class="a" style="left:401px;top:842px;width:1px;height:24px;background:#cdbf88;"></div><div class="a" style="left:535px;top:842px;width:1px;height:24px;background:#cdbf88;"></div><div class="a" style="left:669px;top:842px;width:1px;height:24px;background:#cdbf88;"></div><div class="a" style="left:787px;top:842px;width:1px;height:24px;background:#cdbf88;"></div><div class="a" style="left:904px;top:842px;width:1px;height:24px;background:#cdbf88;"></div><div class="a" style="left:1038px;top:842px;width:1px;height:24px;background:#cdbf88;"></div><div class="a" style="left:1172px;top:842px;width:1px;height:24px;background:#cdbf88;"></div><div class="a" style="left:0;top:0;width:1200px;height:948px;"><div class="t" style="left:71px;top:844.5px;font-size:17px;line-height:20px;color:#262626;letter-spacing:0.23px;transform:scaleY(1.07);transform-origin:0 15.5px;">Прибыли и убытки, 99</div><div class="t" style="right:669px;top:844.5px;font-size:17px;line-height:20px;color:#262626;transform:scaleY(1.07);transform-origin:0 15.5px;">50 000,00</div><div class="t" style="right:417px;top:844.5px;font-size:17px;line-height:20px;color:#262626;transform:scaleY(1.07);transform-origin:0 15.5px;">4 500,00</div><div class="t" style="right:300px;top:844.5px;font-size:17px;line-height:20px;color:#262626;transform:scaleY(1.07);transform-origin:0 15.5px;">4 500,00</div><div class="t" style="right:166px;top:844.5px;font-size:17px;line-height:20px;color:#262626;transform:scaleY(1.07);transform-origin:0 15.5px;">50 000,00</div></div><div class="a" style="left:67px;top:866px;width:1105px;height:45px;background:#fff;"></div><div class="a" style="left:67px;top:911px;width:1105px;height:1px;background:#cdbf88;"></div><div class="a" style="left:401px;top:866px;width:1px;height:46px;background:#cdbf88;"></div><div class="a" style="left:535px;top:866px;width:1px;height:46px;background:#cdbf88;"></div><div class="a" style="left:669px;top:866px;width:1px;height:46px;background:#cdbf88;"></div><div class="a" style="left:787px;top:866px;width:1px;height:46px;background:#cdbf88;"></div><div class="a" style="left:904px;top:866px;width:1px;height:46px;background:#cdbf88;"></div><div class="a" style="left:1038px;top:866px;width:1px;height:46px;background:#cdbf88;"></div><div class="a" style="left:1172px;top:866px;width:1px;height:46px;background:#cdbf88;"></div><div class="a" style="left:0;top:0;width:1200px;height:948px;"><div class="t" style="left:93px;top:868.5px;font-size:17px;line-height:20px;color:#262626;letter-spacing:0.3px;transform:scaleY(1.07);transform-origin:0 15.5px;">Прибыли и убытки (за исключением</div><div class="t" style="left:93px;top:891.0px;font-size:17px;line-height:20px;color:#262626;letter-spacing:0.11px;transform:scaleY(1.07);transform-origin:0 15.5px;">налога на прибыль), 99.01</div><div class="t" style="right:669px;top:868.5px;font-size:17px;line-height:20px;color:#262626;transform:scaleY(1.07);transform-origin:0 15.5px;">50 000,00</div><div class="t" style="right:417px;top:868.5px;font-size:17px;line-height:20px;color:#262626;transform:scaleY(1.07);transform-origin:0 15.5px;">4 500,00</div><div class="t" style="right:300px;top:868.5px;font-size:17px;line-height:20px;color:#262626;transform:scaleY(1.07);transform-origin:0 15.5px;">4 500,00</div><div class="t" style="right:166px;top:868.5px;font-size:17px;line-height:20px;color:#262626;transform:scaleY(1.07);transform-origin:0 15.5px;">50 000,00</div></div><div class="a" style="left:67px;top:912px;width:1105px;height:27px;background:#f4ecc5;"></div><div class="a" style="left:67px;top:939px;width:1105px;height:1px;background:#cdbf88;"></div><div class="a" style="left:401px;top:912px;width:1px;height:28px;background:#cdbf88;"></div><div class="a" style="left:535px;top:912px;width:1px;height:28px;background:#cdbf88;"></div><div class="a" style="left:669px;top:912px;width:1px;height:28px;background:#cdbf88;"></div><div class="a" style="left:787px;top:912px;width:1px;height:28px;background:#cdbf88;"></div><div class="a" style="left:904px;top:912px;width:1px;height:28px;background:#cdbf88;"></div><div class="a" style="left:1038px;top:912px;width:1px;height:28px;background:#cdbf88;"></div><div class="a" style="left:1172px;top:912px;width:1px;height:28px;background:#cdbf88;"></div><div class="t" style="left:70.5px;top:915.0px;font-size:20px;line-height:24px;color:#262626;letter-spacing:0.3px;transform:scaleY(1.1);transform-origin:0 19.0px;">Итого</div><div class="t" style="right:669px;top:915.0px;font-size:20px;line-height:24px;color:#262626;letter-spacing:0.2px;transform:scaleY(1.1);transform-origin:0 19.0px;">689 722,10</div><div class="t" style="right:535px;top:915.0px;font-size:20px;line-height:24px;color:#262626;letter-spacing:0.2px;transform:scaleY(1.1);transform-origin:0 19.0px;">689 722,10</div><div class="t" style="right:417px;top:915.0px;font-size:20px;line-height:24px;color:#262626;letter-spacing:0.2px;transform:scaleY(1.1);transform-origin:0 19.0px;">25 000,00</div><div class="t" style="right:300px;top:915.0px;font-size:20px;line-height:24px;color:#262626;letter-spacing:0.2px;transform:scaleY(1.1);transform-origin:0 19.0px;">25 000,00</div><div class="t" style="right:166px;top:915.0px;font-size:20px;line-height:24px;color:#262626;letter-spacing:0.2px;transform:scaleY(1.1);transform-origin:0 19.0px;">689 722,10</div><div class="t" style="right:32px;top:915.0px;font-size:20px;line-height:24px;color:#262626;letter-spacing:0.2px;transform:scaleY(1.1);transform-origin:0 19.0px;">689 722,10</div><div class="a" style="left:68px;top:418px;width:969px;height:23px;backdrop-filter:blur(1.5px);-webkit-backdrop-filter:blur(1.5px);"></div><div class="a" style="left:82px;top:495px;width:955px;height:42px;backdrop-filter:blur(1.5px);-webkit-backdrop-filter:blur(1.5px);"></div><div class="a" style="left:75px;top:612px;width:1099px;height:80px;backdrop-filter:blur(1.5px);-webkit-backdrop-filter:blur(1.5px);"></div><div class="a" style="left:72px;top:749px;width:1102px;height:45px;backdrop-filter:blur(1.5px);-webkit-backdrop-filter:blur(1.5px);"></div><div class="a" style="left:68px;top:418px;width:969px;height:23px;background:rgba(255,254,153,0.35);"></div><div class="a" style="left:82px;top:495px;width:955px;height:18px;background:rgba(228,228,228,0.22);"></div><div class="a" style="left:82px;top:513px;width:955px;height:24px;background:rgba(255,254,153,0.35);"></div><div class="a" style="left:75px;top:612px;width:1099px;height:41px;background:rgba(255,254,153,0.35);"></div><div class="a" style="left:75px;top:653px;width:1099px;height:39px;background:rgba(228,228,228,0.22);"></div><div class="a" style="left:72px;top:749px;width:1102px;height:45px;background:rgba(228,228,228,0.22);"></div><div class="a" style="left:20px;top:267px;width:1px;height:681px;background:#a4a4a4;"></div><div class="a" style="left:66px;top:267px;width:1px;height:681px;background:#a4a4a4;"></div><div class="a" style="left:26px;top:422px;width:15px;height:15px;background:#fff;border:1px solid #8e8e8e;border-radius:2px;"></div><div class="a" style="left:30px;top:429px;width:10px;height:2px;background:#333;"></div><div class="a" style="left:34px;top:425px;width:2px;height:10px;background:#333;"></div><div class="a" style="left:26px;top:446px;width:15px;height:15px;background:#fff;border:1px solid #8e8e8e;border-radius:2px;"></div><div class="a" style="left:30px;top:453px;width:10px;height:2px;background:#333;"></div><div class="a" style="left:26px;top:518px;width:15px;height:15px;background:#fff;border:1px solid #8e8e8e;border-radius:2px;"></div><div class="a" style="left:30px;top:525px;width:10px;height:2px;background:#333;"></div><div class="a" style="left:34px;top:521px;width:2px;height:10px;background:#333;"></div><div class="a" style="left:26px;top:553px;width:15px;height:15px;background:#fff;border:1px solid #8e8e8e;border-radius:2px;"></div><div class="a" style="left:30px;top:560px;width:10px;height:2px;background:#333;"></div><div class="a" style="left:26px;top:623px;width:15px;height:15px;background:#fff;border:1px solid #8e8e8e;border-radius:2px;"></div><div class="a" style="left:30px;top:630px;width:10px;height:2px;background:#333;"></div><div class="a" style="left:34px;top:626px;width:2px;height:10px;background:#333;"></div><div class="a" style="left:26px;top:704px;width:15px;height:15px;background:#fff;border:1px solid #8e8e8e;border-radius:2px;"></div><div class="a" style="left:30px;top:711px;width:10px;height:2px;background:#333;"></div><div class="a" style="left:34px;top:707px;width:2px;height:10px;background:#333;"></div><div class="a" style="left:26px;top:728px;width:15px;height:15px;background:#fff;border:1px solid #8e8e8e;border-radius:2px;"></div><div class="a" style="left:30px;top:735px;width:10px;height:2px;background:#333;"></div><div class="a" style="left:26px;top:846px;width:15px;height:15px;background:#fff;border:1px solid #8e8e8e;border-radius:2px;"></div><div class="a" style="left:30px;top:853px;width:10px;height:2px;background:#333;"></div><div class="a" style="left:34px;top:463px;width:1px;height:50px;background:#999;"></div><div class="a" style="left:34px;top:513px;width:32px;height:1px;background:#999;"></div><div class="a" style="left:34px;top:570px;width:1px;height:37px;background:#999;"></div><div class="a" style="left:34px;top:607px;width:32px;height:1px;background:#999;"></div><div class="a" style="left:34px;top:745px;width:1px;height:96px;background:#999;"></div><div class="a" style="left:34px;top:841px;width:32px;height:1px;background:#999;"></div><div class="a" style="left:34px;top:863px;width:1px;height:48px;background:#999;"></div><div class="a" style="left:34px;top:911px;width:32px;height:1px;background:#999;"></div>
</body></html>
